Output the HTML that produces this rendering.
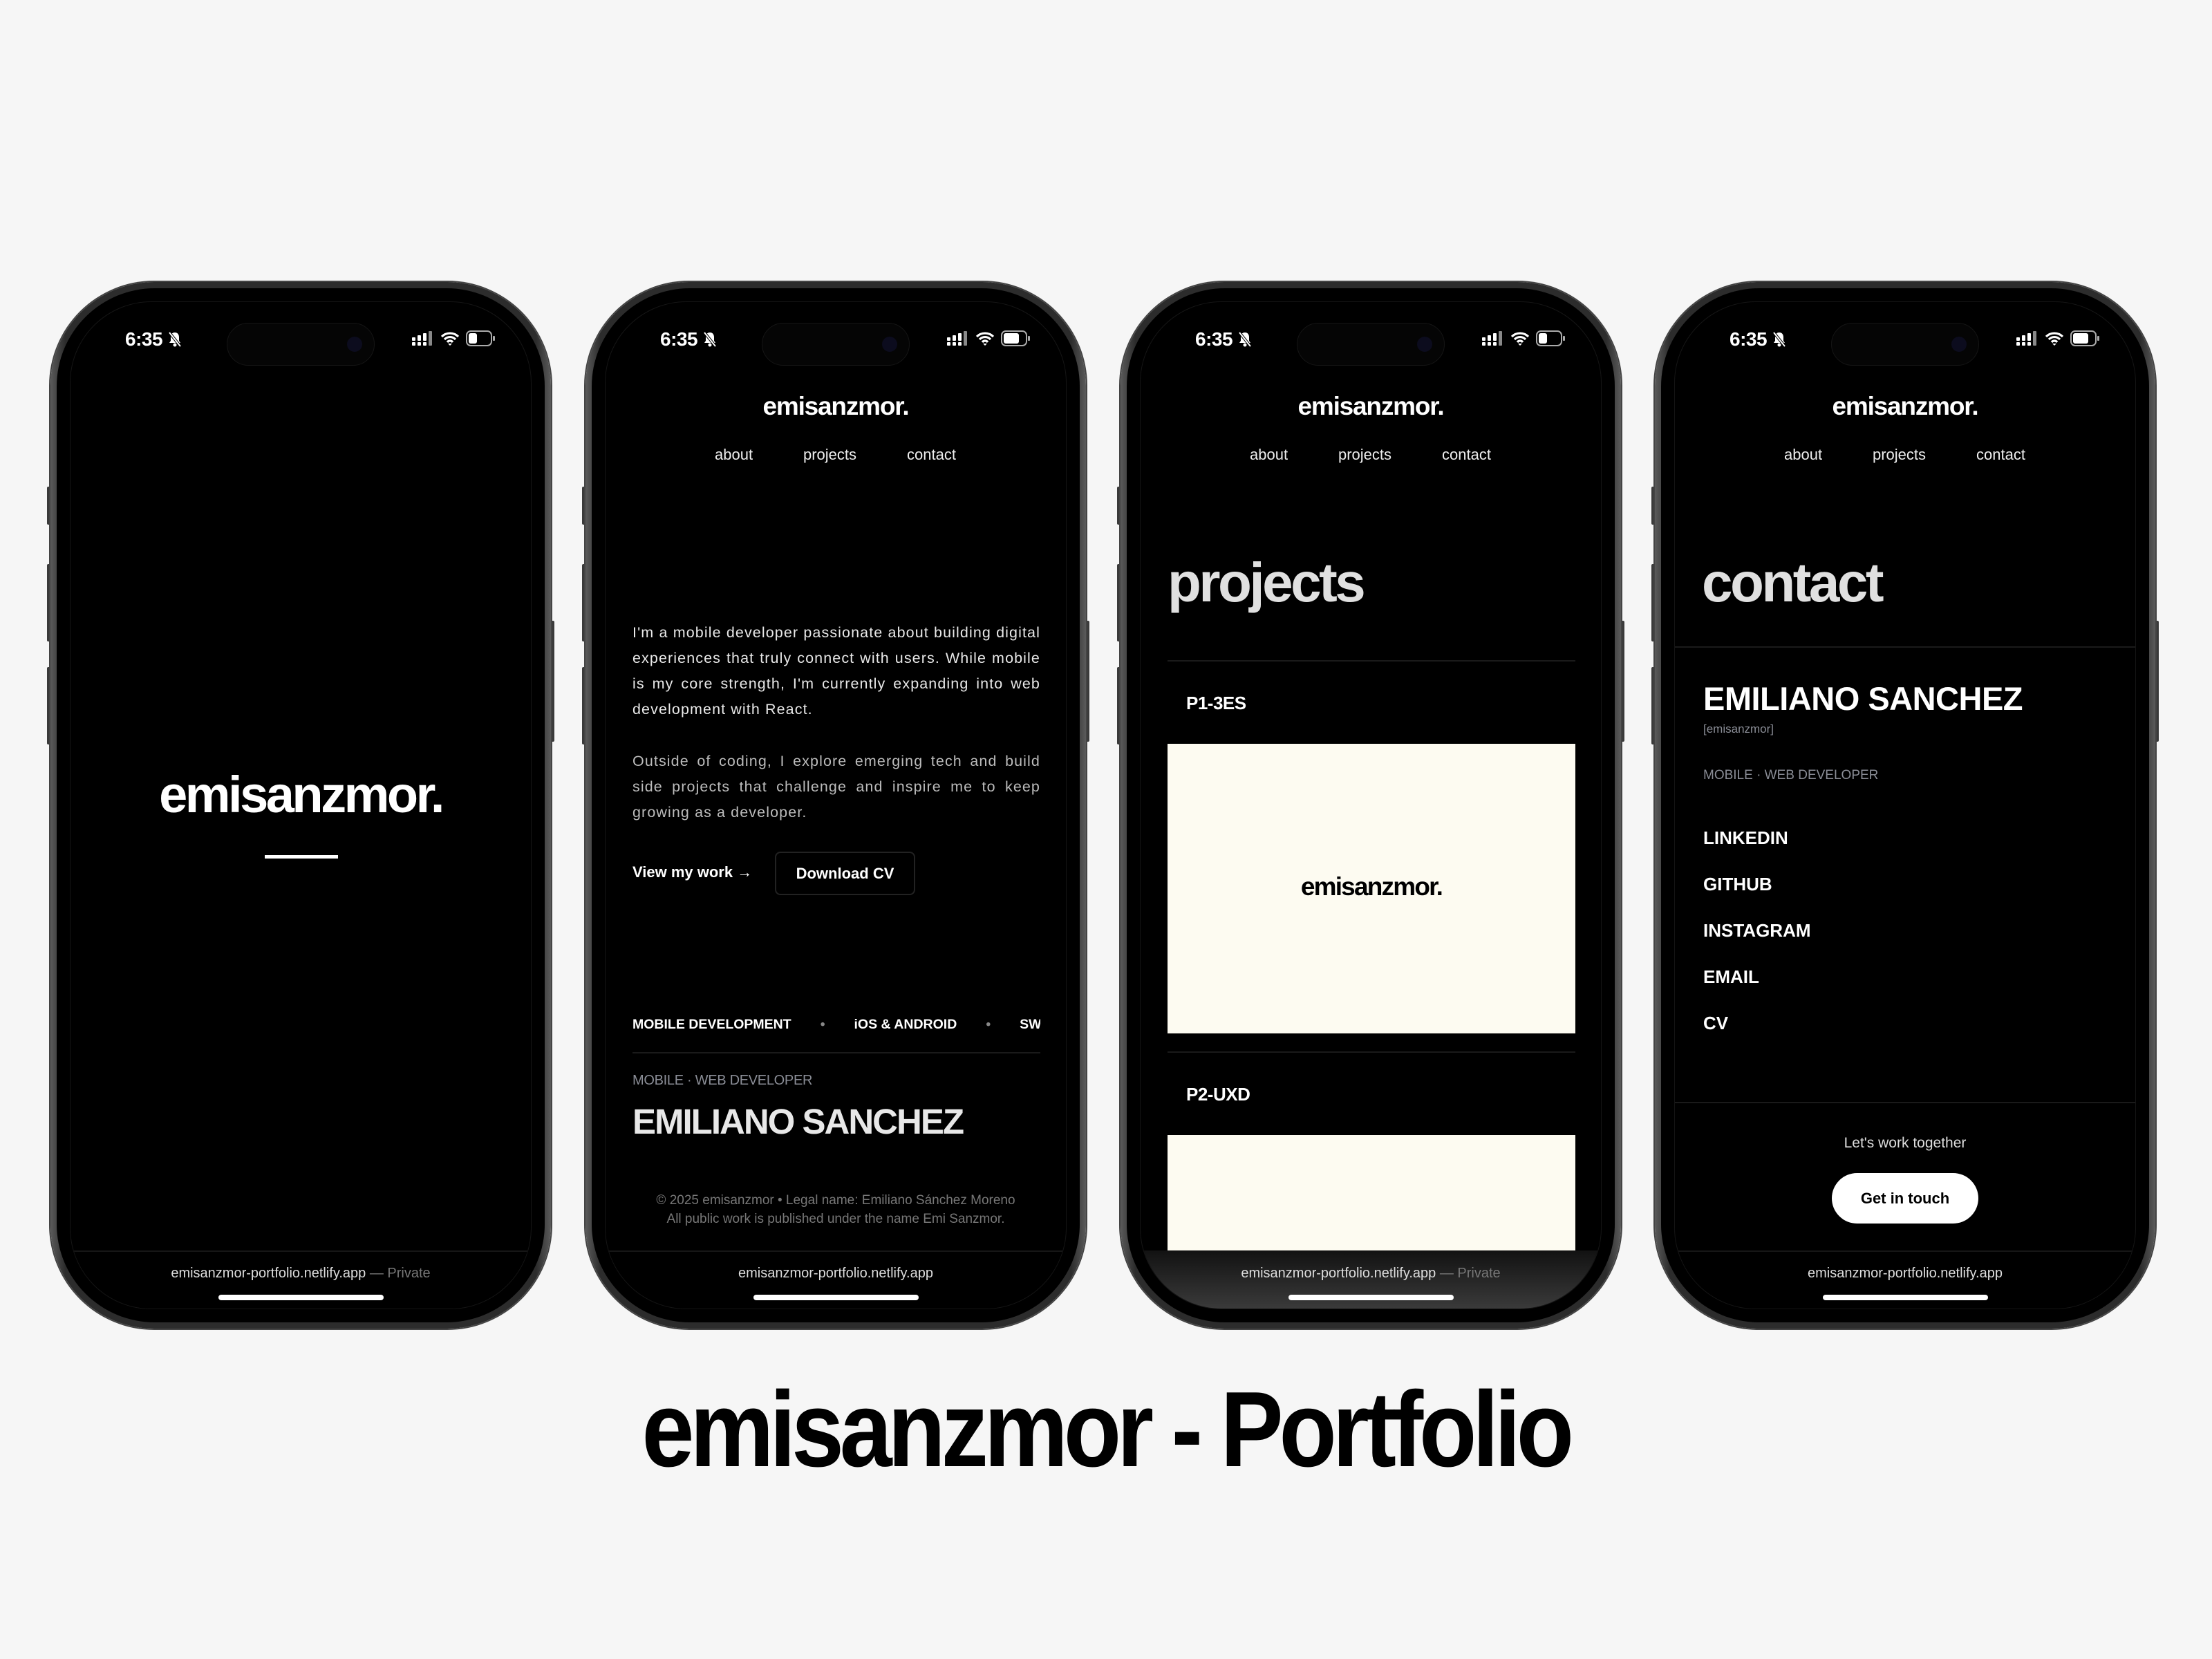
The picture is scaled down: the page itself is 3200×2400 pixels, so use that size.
<!DOCTYPE html>
<html><head><meta charset="utf-8"><style>
*{margin:0;padding:0;box-sizing:border-box}
body{width:3200px;height:2400px;background:#f6f6f6;position:relative;overflow:hidden;font-family:"Liberation Sans",Arial,sans-serif}
.ph{position:absolute;top:408px;width:724px;height:1514px}
.fr{position:absolute;inset:0;border-radius:150px;background:linear-gradient(90deg,#5a5a5a,#2c2c2c 3%,#2c2c2c 97%,#5a5a5a);box-shadow:0 0 0 2px #444}
.bz{position:absolute;inset:9px;border-radius:142px;background:#000}
.sc{position:absolute;left:28px;top:28px;right:28px;bottom:28px;border-radius:118px;background:#000;overflow:hidden;border:1px solid #151515}
.sb{position:absolute;width:7px;background:#3a3a3a;border-radius:2px}
.a{position:absolute;white-space:nowrap;color:#fff}
.c{left:0;right:0;text-align:center}
.time{left:79px;top:38px;font-size:28px;font-weight:bold;letter-spacing:-0.5px}
.isl{position:absolute;left:226px;top:30px;width:214px;height:62px;border-radius:31px;background:#050505;border:1px solid #151515}
.cam{position:absolute;left:400px;top:50px;width:22px;height:22px;border-radius:50%;background:#0c0c1e}
.logo{font-weight:bold;letter-spacing:-1.2px;font-size:37px}
.nav{font-size:22px;color:#eee}
.bar{position:absolute;left:0;right:0;top:1372px;bottom:0;border-top:2px solid #161616;background:#000}
.url{top:1394px;font-size:20px;color:#ddd}
.url span{color:#777}
.home{position:absolute;left:245px;width:239px;top:1436px;height:8px;border-radius:4px;background:#fff}
.line{position:absolute;height:2px;background:#1a1a1a}
.para{position:absolute;left:39px;width:590px;white-space:normal;text-align:justify;font-size:21.5px;line-height:37px;letter-spacing:1.1px}
.s1{top:42px}
</style></head><body>

<!-- PHONE 1 -->
<div class="ph" style="left:73px">
<div class="sb" style="left:-5px;top:296px;height:55px"></div><div class="sb" style="left:-5px;top:408px;height:112px"></div><div class="sb" style="left:-5px;top:557px;height:112px"></div><div class="sb" style="right:-5px;top:490px;height:175px"></div>
<div class="fr"></div><div class="bz"></div>
<div class="sc">
<div class="isl"></div><div class="cam"></div>
<div class="a time">6:35 <svg width="22" height="24" viewBox="0 0 22 24" style="vertical-align:-3px"><path d="M11 2c-4 0-6 3-6 7v5l-2 3h16l-2-3V9c0-4-2-7-6-7z" fill="#fff"/><circle cx="11" cy="20" r="2.5" fill="#fff"/><path d="M3 2l16 20" stroke="#000" stroke-width="4"/><path d="M3 2l16 20" stroke="#fff" stroke-width="2"/></svg></div>
<svg class="a" style="left:494px;top:42px" width="32" height="22" viewBox="0 0 32 22"><g fill="#fff"><rect x="0" y="9" width="5" height="5" rx="1"/><rect x="0" y="16" width="5" height="5" rx="1"/><rect x="8" y="6" width="5" height="8" rx="1"/><rect x="8" y="16" width="5" height="5" rx="1"/><rect x="16" y="3" width="5" height="11" rx="1"/><rect x="16" y="16" width="5" height="5" rx="1"/><rect x="24" y="0" width="5" height="21" rx="1" fill="#888"/></g></svg>
<svg class="a" style="left:535px;top:42px" width="28" height="22" viewBox="0 0 28 22"><path d="M2 8a17 17 0 0124 0M6 12a11 11 0 0116 0M10 16a5 5 0 018 0" stroke="#fff" stroke-width="3.2" fill="none"/><path d="M11 18l3 3 3-3z" fill="#fff"/></svg>
<svg class="a" style="left:572px;top:41px" width="42" height="24" viewBox="0 0 42 24"><rect x="1" y="1" width="36" height="21" rx="6" fill="none" stroke="#aaa" stroke-width="2"/><rect x="4" y="4" width="12" height="15" rx="3" fill="#fff"/><rect x="39" y="8" width="3" height="7" rx="1" fill="#aaa"/></svg>
<div class="a c logo" style="top:670px;font-size:74px;letter-spacing:-3.5px">emisanzmor.</div>
<div style="position:absolute;left:281px;top:800px;width:106px;height:5px;background:#fff"></div>
<div class="bar"></div>
<div class="a c url">emisanzmor-portfolio.netlify.app <span>— Private</span></div>
<div class="home" style="left:214px"></div>
</div></div>

<!-- PHONE 2 -->
<div class="ph" style="left:847px">
<div class="sb" style="left:-5px;top:296px;height:55px"></div><div class="sb" style="left:-5px;top:408px;height:112px"></div><div class="sb" style="left:-5px;top:557px;height:112px"></div><div class="sb" style="right:-5px;top:490px;height:175px"></div>
<div class="fr"></div><div class="bz"></div>
<div class="sc">
<div class="isl"></div><div class="cam"></div>
<div class="a time">6:35 <svg width="22" height="24" viewBox="0 0 22 24" style="vertical-align:-3px"><path d="M11 2c-4 0-6 3-6 7v5l-2 3h16l-2-3V9c0-4-2-7-6-7z" fill="#fff"/><circle cx="11" cy="20" r="2.5" fill="#fff"/><path d="M3 2l16 20" stroke="#000" stroke-width="4"/><path d="M3 2l16 20" stroke="#fff" stroke-width="2"/></svg></div>
<svg class="a" style="left:494px;top:42px" width="32" height="22" viewBox="0 0 32 22"><g fill="#fff"><rect x="0" y="9" width="5" height="5" rx="1"/><rect x="0" y="16" width="5" height="5" rx="1"/><rect x="8" y="6" width="5" height="8" rx="1"/><rect x="8" y="16" width="5" height="5" rx="1"/><rect x="16" y="3" width="5" height="11" rx="1"/><rect x="16" y="16" width="5" height="5" rx="1"/><rect x="24" y="0" width="5" height="21" rx="1" fill="#888"/></g></svg>
<svg class="a" style="left:535px;top:42px" width="28" height="22" viewBox="0 0 28 22"><path d="M2 8a17 17 0 0124 0M6 12a11 11 0 0116 0M10 16a5 5 0 018 0" stroke="#fff" stroke-width="3.2" fill="none"/><path d="M11 18l3 3 3-3z" fill="#fff"/></svg>
<svg class="a" style="left:572px;top:41px" width="42" height="24" viewBox="0 0 42 24"><rect x="1" y="1" width="36" height="21" rx="6" fill="none" stroke="#aaa" stroke-width="2"/><rect x="4" y="4" width="22" height="15" rx="3" fill="#fff"/><rect x="39" y="8" width="3" height="7" rx="1" fill="#aaa"/></svg>
<div class="a c logo" style="top:130px">emisanzmor.</div>
<div class="a nav" style="left:158px;top:208px">about</div><div class="a nav" style="left:286px;top:208px">projects</div><div class="a nav" style="left:436px;top:208px">contact</div>
<div class="para" style="top:460px;color:#e8e8e8">I'm a mobile developer passionate about building digital experiences that truly connect with users. While mobile is my core strength, I'm currently expanding into web development with React.</div>
<div class="para" style="top:646px;color:#bbb">Outside of coding, I explore emerging tech and build side projects that challenge and inspire me to keep growing as a developer.</div>
<div class="a" style="left:39px;top:812px;font-size:22px;font-weight:bold">View my work →</div>
<div class="a" style="left:245px;top:795px;width:203px;height:63px;border:2px solid #222;border-radius:8px;font-size:22px;font-weight:bold;text-align:center;line-height:59px">Download CV</div>
<div style="position:absolute;left:39px;top:1034px;width:590px;height:30px;overflow:hidden;font-size:19.5px;font-weight:bold;color:#fff;white-space:nowrap">MOBILE DEVELOPMENT<span style="margin:0 42px;color:#888">•</span>iOS &amp; ANDROID<span style="margin:0 42px;color:#888">•</span>SWIFT</div>
<div class="line" style="left:39px;width:590px;top:1085px"></div>
<div class="a" style="left:39px;top:1115px;font-size:20px;color:#8a8d96;letter-spacing:-0.3px">MOBILE · WEB DEVELOPER</div>
<div class="a" style="left:39px;top:1156px;font-size:51px;font-weight:bold;color:#e8e8e8;letter-spacing:-2px">EMILIANO SANCHEZ</div>
<div class="a c" style="top:1286px;font-size:19px;color:#777;line-height:27px">© 2025 emisanzmor • Legal name: Emiliano Sánchez Moreno<br>All public work is published under the name Emi Sanzmor.</div>
<div class="bar"></div>
<div class="a c url">emisanzmor-portfolio.netlify.app</div>
<div class="home" style="left:214px"></div>
</div></div>

<!-- PHONE 3 -->
<div class="ph" style="left:1621px">
<div class="sb" style="left:-5px;top:296px;height:55px"></div><div class="sb" style="left:-5px;top:408px;height:112px"></div><div class="sb" style="left:-5px;top:557px;height:112px"></div><div class="sb" style="right:-5px;top:490px;height:175px"></div>
<div class="fr"></div><div class="bz"></div>
<div class="sc">
<div class="isl"></div><div class="cam"></div>
<div class="a time">6:35 <svg width="22" height="24" viewBox="0 0 22 24" style="vertical-align:-3px"><path d="M11 2c-4 0-6 3-6 7v5l-2 3h16l-2-3V9c0-4-2-7-6-7z" fill="#fff"/><circle cx="11" cy="20" r="2.5" fill="#fff"/><path d="M3 2l16 20" stroke="#000" stroke-width="4"/><path d="M3 2l16 20" stroke="#fff" stroke-width="2"/></svg></div>
<svg class="a" style="left:494px;top:42px" width="32" height="22" viewBox="0 0 32 22"><g fill="#fff"><rect x="0" y="9" width="5" height="5" rx="1"/><rect x="0" y="16" width="5" height="5" rx="1"/><rect x="8" y="6" width="5" height="8" rx="1"/><rect x="8" y="16" width="5" height="5" rx="1"/><rect x="16" y="3" width="5" height="11" rx="1"/><rect x="16" y="16" width="5" height="5" rx="1"/><rect x="24" y="0" width="5" height="21" rx="1" fill="#888"/></g></svg>
<svg class="a" style="left:535px;top:42px" width="28" height="22" viewBox="0 0 28 22"><path d="M2 8a17 17 0 0124 0M6 12a11 11 0 0116 0M10 16a5 5 0 018 0" stroke="#fff" stroke-width="3.2" fill="none"/><path d="M11 18l3 3 3-3z" fill="#fff"/></svg>
<svg class="a" style="left:572px;top:41px" width="42" height="24" viewBox="0 0 42 24"><rect x="1" y="1" width="36" height="21" rx="6" fill="none" stroke="#aaa" stroke-width="2"/><rect x="4" y="4" width="12" height="15" rx="3" fill="#fff"/><rect x="39" y="8" width="3" height="7" rx="1" fill="#aaa"/></svg>
<div class="a c logo" style="top:130px">emisanzmor.</div>
<div class="a nav" style="left:158px;top:208px">about</div><div class="a nav" style="left:286px;top:208px">projects</div><div class="a nav" style="left:436px;top:208px">contact</div>
<div class="a" style="left:39px;top:360px;font-size:80px;font-weight:bold;letter-spacing:-3.5px;color:#e0e0e0">projects</div>
<div class="line" style="left:39px;width:590px;top:518px"></div>
<div class="a" style="left:66px;top:565px;font-size:26px;font-weight:bold;letter-spacing:-0.5px">P1-3ES</div>
<div style="position:absolute;left:39px;width:590px;top:639px;height:419px;background:#fdfbf1"></div>
<div class="a" style="left:39px;width:590px;top:825px;text-align:center;font-size:37px;font-weight:bold;letter-spacing:-1.8px;color:#000">emisanzmor.</div>
<div class="line" style="left:39px;width:590px;top:1084px"></div>
<div class="a" style="left:66px;top:1131px;font-size:26px;font-weight:bold;letter-spacing:-0.5px">P2-UXD</div>
<div style="position:absolute;left:39px;width:590px;top:1205px;height:200px;background:#fdfbf1"></div>
<div class="bar" style="background:linear-gradient(#121212,#3a3a3a);border-top:0"></div>
<div class="a c url">emisanzmor-portfolio.netlify.app <span>— Private</span></div>
<div class="home" style="left:214px"></div>
</div></div>

<!-- PHONE 4 -->
<div class="ph" style="left:2394px">
<div class="sb" style="left:-5px;top:296px;height:55px"></div><div class="sb" style="left:-5px;top:408px;height:112px"></div><div class="sb" style="left:-5px;top:557px;height:112px"></div><div class="sb" style="right:-5px;top:490px;height:175px"></div>
<div class="fr"></div><div class="bz"></div>
<div class="sc">
<div class="isl"></div><div class="cam"></div>
<div class="a time">6:35 <svg width="22" height="24" viewBox="0 0 22 24" style="vertical-align:-3px"><path d="M11 2c-4 0-6 3-6 7v5l-2 3h16l-2-3V9c0-4-2-7-6-7z" fill="#fff"/><circle cx="11" cy="20" r="2.5" fill="#fff"/><path d="M3 2l16 20" stroke="#000" stroke-width="4"/><path d="M3 2l16 20" stroke="#fff" stroke-width="2"/></svg></div>
<svg class="a" style="left:494px;top:42px" width="32" height="22" viewBox="0 0 32 22"><g fill="#fff"><rect x="0" y="9" width="5" height="5" rx="1"/><rect x="0" y="16" width="5" height="5" rx="1"/><rect x="8" y="6" width="5" height="8" rx="1"/><rect x="8" y="16" width="5" height="5" rx="1"/><rect x="16" y="3" width="5" height="11" rx="1"/><rect x="16" y="16" width="5" height="5" rx="1"/><rect x="24" y="0" width="5" height="21" rx="1" fill="#888"/></g></svg>
<svg class="a" style="left:535px;top:42px" width="28" height="22" viewBox="0 0 28 22"><path d="M2 8a17 17 0 0124 0M6 12a11 11 0 0116 0M10 16a5 5 0 018 0" stroke="#fff" stroke-width="3.2" fill="none"/><path d="M11 18l3 3 3-3z" fill="#fff"/></svg>
<svg class="a" style="left:572px;top:41px" width="42" height="24" viewBox="0 0 42 24"><rect x="1" y="1" width="36" height="21" rx="6" fill="none" stroke="#aaa" stroke-width="2"/><rect x="4" y="4" width="22" height="15" rx="3" fill="#fff"/><rect x="39" y="8" width="3" height="7" rx="1" fill="#aaa"/></svg>
<div class="a c logo" style="top:130px">emisanzmor.</div>
<div class="a nav" style="left:158px;top:208px">about</div><div class="a nav" style="left:286px;top:208px">projects</div><div class="a nav" style="left:436px;top:208px">contact</div>
<div class="a" style="left:39px;top:360px;font-size:80px;font-weight:bold;letter-spacing:-3.5px;color:#e0e0e0">contact</div>
<div class="line" style="left:0;right:0;top:498px"></div>
<div class="a" style="left:41px;top:546px;font-size:47px;font-weight:bold;letter-spacing:-0.5px">EMILIANO SANCHEZ</div>
<div class="a" style="left:41px;top:608px;font-size:17px;color:#8a8d96">[emisanzmor]</div>
<div class="a" style="left:41px;top:674px;font-size:19px;color:#8a8d96">MOBILE · WEB DEVELOPER</div>
<div class="a" style="left:41px;top:742px;font-size:26px;font-weight:bold;line-height:67px">LINKEDIN<br>GITHUB<br>INSTAGRAM<br>EMAIL<br>CV</div>
<div class="line" style="left:0;right:0;top:1157px"></div>
<div class="a c" style="top:1205px;font-size:21px;color:#ddd">Let's work together</div>
<div class="a" style="left:227px;top:1260px;width:212px;height:73px;border-radius:37px;background:#fff;color:#000;font-size:22px;font-weight:bold;text-align:center;line-height:73px">Get in touch</div>
<div class="bar"></div>
<div class="a c url">emisanzmor-portfolio.netlify.app</div>
<div class="home" style="left:214px"></div>
</div></div>

<div style="position:absolute;left:0;right:0;top:1968px;text-align:center">
<span style="display:inline-block;font-size:155px;font-weight:bold;letter-spacing:-7px;color:#000;transform:scaleX(0.88);white-space:nowrap;line-height:200px">emisanzmor - Portfolio</span>
</div>
</body></html>
